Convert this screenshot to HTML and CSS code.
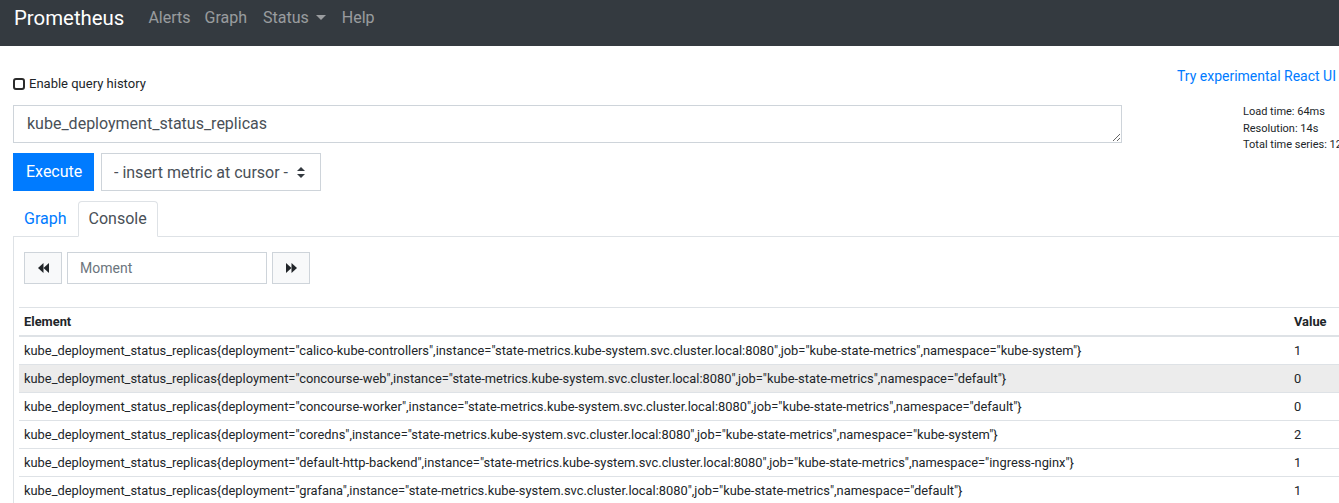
FILE: index.html
```html
<!DOCTYPE html>
<html lang="en">
<head>
<meta charset="utf-8">
<title>Prometheus Time Series Collection and Processing Server</title>
<link rel="stylesheet" href="styles.css">
</head>
<body>
<nav class="navbar">
  <div class="navbar-inner">
    <a class="brand" href="#">Prometheus</a>
    <ul class="nav-links">
      <li><a href="#">Alerts</a></li>
      <li><a href="#">Graph</a></li>
      <li><a href="#" class="dropdown">Status<span class="caret"></span></a></li>
      <li><a href="#">Help</a></li>
    </ul>
  </div>
</nav>

<div class="page">
  <div class="top-row">
    <label class="history"><input type="checkbox" class="check"> Enable query history</label>
    <a class="react-link" href="#">Try experimental React UI</a>
  </div>

  <div class="query-row">
    <textarea class="expr" rows="1">kube_deployment_status_replicas</textarea>
    <div class="stats">
      <div>Load time: 64ms</div>
      <div>Resolution: 14s</div>
      <div>Total time series: 12</div>
    </div>
  </div>

  <div class="action-row">
    <button class="btn-execute">Execute</button>
    <div class="select-wrap">
      <select class="metric-select"><option>- insert metric at cursor -</option></select>
      <svg class="select-arrows" width="8" height="11" viewBox="0 0 8 11"><polygon points="0,4 8,4 4,0" fill="#343a40"/><polygon points="0,7 8,7 4,11" fill="#343a40"/></svg>
    </div>
  </div>

  <ul class="tabs">
    <li><a href="#" class="tab">Graph</a></li>
    <li><a href="#" class="tab active">Console</a></li>
  </ul>

  <div class="tab-content">
    <div class="moment-row">
      <button class="btn-light" aria-label="Previous">
        <svg width="11" height="10" viewBox="0 0 11 10"><polygon points="5.5,0 5.5,10 0,5" fill="#212529"/><polygon points="11,0 11,10 5.5,5" fill="#212529"/></svg>
      </button>
      <input class="moment" type="text" placeholder="Moment">
      <button class="btn-light" aria-label="Next">
        <svg width="11" height="10" viewBox="0 0 11 10"><polygon points="0,0 0,10 5.5,5" fill="#212529"/><polygon points="5.5,0 5.5,10 11,5" fill="#212529"/></svg>
      </button>
    </div>

    <table class="results">
      <thead>
        <tr><th class="col-el">Element</th><th class="col-val">Value</th></tr>
      </thead>
      <tbody>
        <tr><td>kube_deployment_status_replicas{deployment="calico-kube-controllers",instance="state-metrics.kube-system.svc.cluster.local:8080",job="kube-state-metrics",namespace="kube-system"}</td><td>1</td></tr>
        <tr class="hover"><td>kube_deployment_status_replicas{deployment="concourse-web",instance="state-metrics.kube-system.svc.cluster.local:8080",job="kube-state-metrics",namespace="default"}</td><td>0</td></tr>
        <tr><td>kube_deployment_status_replicas{deployment="concourse-worker",instance="state-metrics.kube-system.svc.cluster.local:8080",job="kube-state-metrics",namespace="default"}</td><td>0</td></tr>
        <tr><td>kube_deployment_status_replicas{deployment="coredns",instance="state-metrics.kube-system.svc.cluster.local:8080",job="kube-state-metrics",namespace="kube-system"}</td><td>2</td></tr>
        <tr><td>kube_deployment_status_replicas{deployment="default-http-backend",instance="state-metrics.kube-system.svc.cluster.local:8080",job="kube-state-metrics",namespace="ingress-nginx"}</td><td>1</td></tr>
        <tr><td>kube_deployment_status_replicas{deployment="grafana",instance="state-metrics.kube-system.svc.cluster.local:8080",job="kube-state-metrics",namespace="default"}</td><td>1</td></tr>
      </tbody>
    </table>
  </div>
</div>
</body>
</html>
```

FILE: styles.css
```css
html, body {
  margin: 0;
  padding: 0;
  overflow: hidden;
}
body {
  font-family: Roboto, "Liberation Sans", sans-serif;
  font-size: 16px;
  line-height: 1.5;
  color: #212529;
  background: #fff;
  width: 1339px;
}
a { text-decoration: none; }

/* navbar */
.navbar {
  background: #343a40;
  height: 46px;
  box-sizing: border-box;
}
.navbar-inner {
  height: 36px;
  display: flex;
  align-items: center;
  padding-left: 14px;
}
.brand {
  color: #fff;
  font-size: 20.4px;
  line-height: 30px;
  margin-right: 16px;
}
.nav-links {
  list-style: none;
  display: flex;
  margin: 0;
  padding: 0;
}
.nav-links a {
  display: block;
  color: rgba(255, 255, 255, 0.5);
  padding: 0 8px;
  line-height: 24px;
}
.nav-links li:first-child a {
  padding-right: 6px;
}
.caret {
  display: inline-block;
  margin-left: 7px;
  vertical-align: 3px;
  border-top: 5px solid rgba(255, 255, 255, 0.5);
  border-left: 5px solid transparent;
  border-right: 5px solid transparent;
}

/* page */
.page {
  padding-left: 13px;
}
.top-row {
  display: flex;
  justify-content: space-between;
  align-items: flex-start;
  padding-right: 3px;
  height: 59px;
}
.history {
  margin-top: 28px;
  font-size: 13px;
  line-height: 20px;
  display: flex;
  align-items: center;
  color: #212529;
}
.check {
  -webkit-appearance: none;
  appearance: none;
  width: 12px;
  height: 12px;
  box-sizing: border-box;
  border: 2px solid #2b2b2b;
  border-radius: 3px;
  margin: 0 4px 0 0;
  background: #fff;
}
.react-link {
  margin-top: 20px;
  font-size: 14px;
  line-height: 21px;
  color: #007bff;
}

.query-row {
  display: flex;
  align-items: flex-start;
  height: 38px;
}
.expr {
  flex-shrink: 0;
  width: 1109px;
  height: 38px;
  box-sizing: border-box;
  font-family: Roboto, "Liberation Sans", sans-serif;
  font-size: 16px;
  line-height: 24px;
  color: #495057;
  padding: 6px 13px;
  border: 1px solid #ced4da;
  border-radius: 0;
  margin: 0;
  display: block;
}
.stats {
  flex-shrink: 0;
  margin-left: 121px;
  margin-top: -1px;
  font-size: 11px;
  line-height: 16.5px;
  white-space: nowrap;
  color: #212529;
}

.action-row {
  display: flex;
  margin-top: 10px;
}
.btn-execute {
  font-family: Roboto, "Liberation Sans", sans-serif;
  font-size: 16px;
  line-height: 24px;
  height: 38px;
  padding: 6px 12px;
  background: #007bff;
  color: #fff;
  border: 1px solid #007bff;
  border-radius: 0;
  margin: 0;
  width: 81px;
}
.select-wrap {
  position: relative;
  margin-left: 7px;
}
.metric-select {
  -webkit-appearance: none;
  appearance: none;
  width: 220px;
  height: 38px;
  font-family: Roboto, "Liberation Sans", sans-serif;
  font-size: 16px;
  color: #495057;
  background: #fff;
  border: 1px solid #ced4da;
  border-radius: 0;
  padding: 0 28px 0 12px;
  margin: 0;
}
.select-arrows {
  position: absolute;
  right: 16px;
  top: 14px;
  pointer-events: none;
}

/* tabs */
.tabs {
  list-style: none;
  display: flex;
  margin: 10px 0 0 0;
  padding: 0;
  width: 1400px;
  border-bottom: 1px solid #dee2e6;
}
.tab {
  display: block;
  padding: 5px 10px;
  line-height: 24px;
  border: 1px solid transparent;
  border-top-left-radius: 4px;
  border-top-right-radius: 4px;
  margin-bottom: -1px;
  color: #007bff;
}
.tab.active {
  color: #495057;
  background: #fff;
  border-color: #dee2e6 #dee2e6 #fff;
}

.tab-content {
  width: 1400px;
  border-left: 1px solid #dee2e6;
  padding: 15px 0 0 5px;
}
.moment-row {
  display: flex;
  gap: 5px;
  margin-left: 5px;
}
.btn-light {
  width: 38px;
  height: 32px;
  background: #f8f9fa;
  border: 1px solid #ced4da;
  border-radius: 0;
  margin: 0;
  padding: 0;
  display: flex;
  align-items: center;
  justify-content: center;
}
.moment {
  width: 200px;
  height: 32px;
  box-sizing: border-box;
  border: 1px solid #ced4da;
  border-radius: 0;
  padding: 4px 12px;
  margin: 0;
  font-family: Roboto, "Liberation Sans", sans-serif;
  font-size: 14px;
  color: #495057;
}
.moment::placeholder { color: #6c757d; }

.results {
  margin-top: 23px;
  border-collapse: collapse;
  font-size: 12.87px;
  line-height: 17px;
  width: 1395px;
}
.results th, .results td {
  text-align: left;
  padding: 5px 5px;
  border-top: 1px solid #dee2e6;
  white-space: nowrap;
  vertical-align: top;
}
.results thead th {
  border-bottom: 2px solid #dee2e6;
  font-weight: 700;
}
.col-el { width: 1260px; }
.results tr.hover td { background: rgba(0, 0, 0, 0.075); }
```
